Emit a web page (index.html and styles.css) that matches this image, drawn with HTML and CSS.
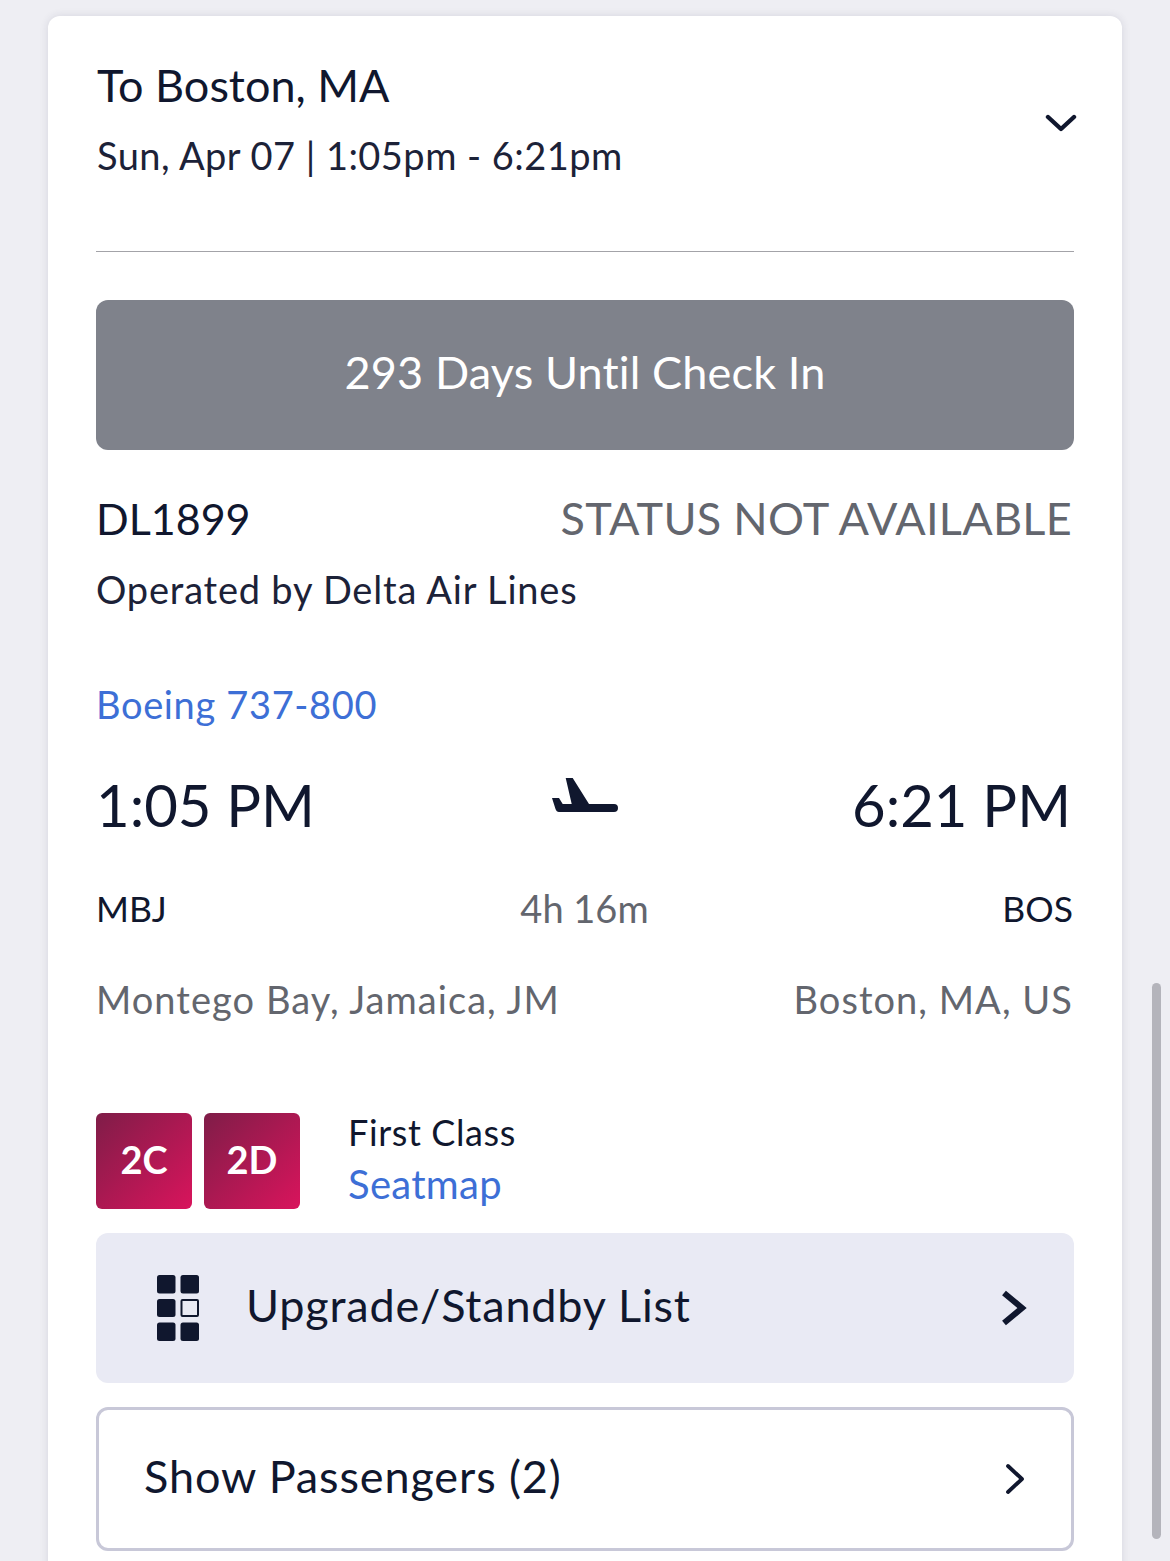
FILE: index.html
```html
<!DOCTYPE html>
<html lang="en">
<head>
<meta charset="utf-8">
<title>To Boston, MA</title>
<link rel="stylesheet" href="styles.css">
</head>
<body>
<main class="card">
  <header class="trip">
    <div>
      <h1 class="trip-title">To Boston, MA</h1>
      <p class="trip-date">Sun, Apr 07 | 1:05pm - 6:21pm</p>
    </div>
    <svg class="chevron-down" viewBox="0 0 32 20" width="32" height="20"><path d="M3 4 L16 16 L29 4" fill="none" stroke="#10172e" stroke-width="4.4" stroke-linecap="round" stroke-linejoin="round"/></svg>
  </header>
  <div class="checkin">293 Days Until Check In</div>
  <div class="flight-row">
    <span class="flight-no">DL1899</span>
    <span class="status">STATUS NOT AVAILABLE</span>
  </div>
  <p class="operated">Operated by Delta Air Lines</p>
  <a class="aircraft">Boeing 737-800</a>
  <div class="times">
    <span class="time">1:05 PM</span>
    <svg class="plane" viewBox="0 0 66 36" width="66" height="36"><path d="M13.7 0 H20.7 L37 26 H62 Q66 26 66 30 Q66 34 62 34 H7 Q4.5 34 3.5 31 L0 20 H7 L10.7 26 H19.7 Z" fill="#10172e"/></svg>
    <span class="time">6:21 PM</span>
  </div>
  <div class="codes">
    <span class="code">MBJ</span>
    <span class="duration">4h 16m</span>
    <span class="code">BOS</span>
  </div>
  <div class="cities">
    <span>Montego Bay, Jamaica, JM</span>
    <span>Boston, MA, US</span>
  </div>
  <div class="seats">
    <span class="seat">2C</span>
    <span class="seat">2D</span>
    <div class="seat-info">
      <span class="cabin">First Class</span>
      <a class="seatmap">Seatmap</a>
    </div>
  </div>
  <div class="upgrade">
    <svg class="grid-icon" viewBox="0 0 42 66" width="42" height="66">
      <rect x="0" y="0" width="18.5" height="18.5" rx="2.5"/>
      <rect x="23.5" y="0" width="18.5" height="18.5" rx="2.5"/>
      <rect x="0" y="24" width="18.5" height="18" rx="2.5"/>
      <rect class="grid-open" x="24.5" y="25" width="16.5" height="16" rx="1"/>
      <rect x="0" y="47.5" width="18.5" height="18.5" rx="2.5"/>
      <rect x="23.5" y="47.5" width="18.5" height="18.5" rx="2.5"/>
    </svg>
    <span class="row-label">Upgrade/Standby List</span>
    <svg class="chevron-bold" viewBox="0 0 26 36" width="26" height="36"><path d="M3 3 L21 18 L3 33" fill="none" stroke="#10172e" stroke-width="6"/></svg>
  </div>
  <div class="passengers">
    <span class="row-label">Show Passengers (2)</span>
    <svg class="chevron-thin" viewBox="0 0 20 32" width="20" height="32"><path d="M3 3 L17 16 L3 29" fill="none" stroke="#10172e" stroke-width="3.8" stroke-linecap="round" stroke-linejoin="round"/></svg>
  </div>
</main>
<div class="scrollbar" aria-hidden="true"></div>
</body>
</html>
```

FILE: styles.css
```css
* { box-sizing: border-box; }
html, body { margin: 0; height: 1561px; overflow: hidden; }
body {
  background: #eeeef3;
  font-family: Lato, "Open Sans", sans-serif;
  color: #10172e;
  padding: 16px 48px 0;
}
h1, p { margin: 0; font-weight: 400; }
.card {
  width: 1074px;
  height: 1600px;
  background: #fff;
  border-radius: 12px;
  box-shadow: 0 0 8px rgba(40, 40, 70, 0.12);
  padding: 0 48px;
}
.trip {
  display: flex;
  justify-content: space-between;
  align-items: center;
  height: 236px;
  padding-bottom: 14px;
  border-bottom: 1px solid #a3a3a8;
}
.trip-title { font-size: 45px; line-height: 54px; margin-top: -17px; padding-left: 1px; }
.trip-date { font-size: 38px; line-height: 48px; margin-top: 19px; padding-left: 1px; color: #1c2238; letter-spacing: 0.46px; }
.chevron-down { margin: -8px -3px 0 0; }
.checkin {
  margin-top: 48px;
  height: 150px;
  background: #7f828b;
  border-radius: 12px;
  display: flex;
  align-items: center;
  justify-content: center;
  color: #fff;
  font-size: 45px;
  letter-spacing: 0.15px;
  padding-bottom: 6px;
}
.flight-row {
  display: flex;
  justify-content: space-between;
  align-items: center;
  margin-top: 40px;
  height: 56px;
  padding-right: 2px;
}
.flight-no { font-size: 43px; }
.status { font-size: 45px; color: #63666e; letter-spacing: 0.28px; }
.operated { font-size: 38px; line-height: 46px; margin-top: 20px; color: #1c2238; letter-spacing: 0.8px; }
.aircraft { display: block; margin-top: 69px; font-size: 38px; line-height: 46px; color: #3d6fd6; letter-spacing: 0.65px; }
.times {
  display: flex;
  justify-content: space-between;
  align-items: center;
  margin-top: 38px;
  height: 76px;
  padding-right: 3px;
}
.time { font-size: 58px; padding-top: 3px; }
.plane { margin: -14px 0 0 2px; }
.codes {
  display: flex;
  justify-content: space-between;
  align-items: center;
  margin-top: 45px;
  height: 44px;
  padding-right: 1px;
}
.code { font-size: 35.5px; }
.duration { font-size: 38px; color: #63666e; }
.cities {
  display: flex;
  justify-content: space-between;
  margin-top: 46px;
  height: 46px;
  font-size: 38px;
  line-height: 46px;
  color: #63666e;
  padding-right: 1px;
  letter-spacing: 1.05px;
}
.seats { display: flex; align-items: center; gap: 12px; height: 96px; margin-top: 91px; }
.seat {
  width: 96px;
  height: 96px;
  border-radius: 6px;
  background: linear-gradient(135deg, #7f1d48, #d9145c);
  color: #fff;
  font-size: 38px;
  font-weight: 700;
  display: flex;
  align-items: center;
  justify-content: center;
  padding-bottom: 4px;
}
.seat-info { display: flex; flex-direction: column; margin-left: 36px; }
.cabin { font-size: 36px; line-height: 44px; letter-spacing: 0.6px; margin-top: -3px; }
.seatmap { font-size: 40px; line-height: 52px; color: #3d6fd6; letter-spacing: 0.3px; margin-top: 4px; }
.upgrade, .passengers { display: flex; align-items: center; border-radius: 12px; }
.upgrade {
  margin-top: 24px;
  height: 150px;
  background: #e9eaf4;
  padding: 0 47px 0 61px;
}
.grid-icon { fill: #10172e; flex: none; }
.grid-open { fill: none; stroke: #10172e; stroke-width: 2; }
.row-label { font-size: 45px; flex: 1; letter-spacing: 0.8px; margin-top: -6px; }
.upgrade .row-label { margin-left: 47px; }
.passengers {
  margin-top: 24px;
  height: 144px;
  border: 3px solid #c8c8d8;
  padding: 0 46px 0 45px;
}
.passengers .row-label { letter-spacing: 0.88px; }
.scrollbar {
  position: absolute;
  left: 1152px;
  top: 983px;
  width: 9px;
  height: 556px;
  background: #b4b4bb;
  border-radius: 5px;
}
```
